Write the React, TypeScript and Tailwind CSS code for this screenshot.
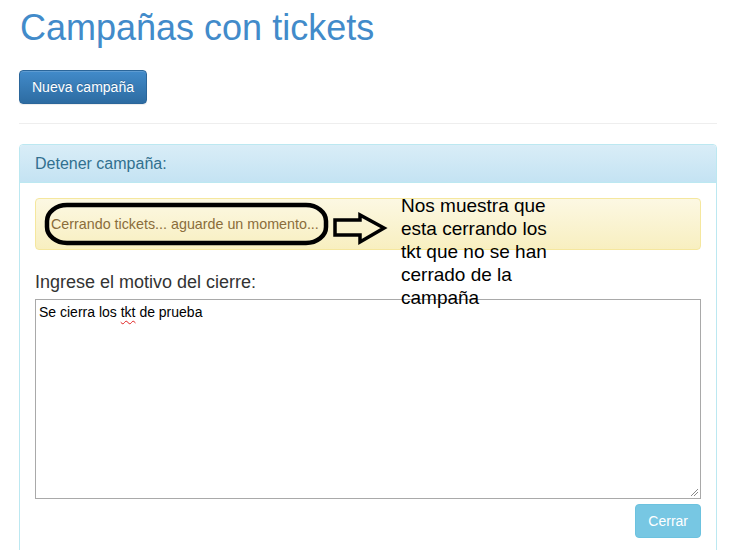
import React from 'react';

const font = "font-['Liberation_Sans',Arial,Helvetica,sans-serif]";

function ClosingAlert() {
    return (
        <div className="relative z-10 rounded-[4px] border border-[#f5e79e] bg-gradient-to-b from-[#fcf8e3] to-[#f8efc0] p-[15px] text-[14.3px] leading-[20px] text-[#8a6d3b]">
            Cerrando tickets... aguarde un momento...
            {/* hand-drawn annotation: ring around the message + arrow */}
            <svg className="pointer-events-none absolute left-[-35px] top-[-198px]" width="420" height="260" viewBox="0 0 420 260">
                <rect x="46" y="204" width="279" height="38" rx="20" ry="16" fill="none" stroke="#000" strokeWidth="4.5" />
                <polygon
                    points="334,219 359,219 359,214 383,227 359,241 359,234 334,234"
                    fill="none"
                    stroke="#000"
                    strokeWidth="3.5"
                    strokeLinejoin="miter"
                />
            </svg>
            <div className="pointer-events-none absolute left-[365px] top-[-5px] text-[19px] leading-[23px] text-black">
                <div className="whitespace-nowrap">Nos muestra que</div>
                <div className="whitespace-nowrap">esta cerrando los</div>
                <div className="whitespace-nowrap">tkt que no se han</div>
                <div className="whitespace-nowrap">cerrado de la</div>
                <div className="whitespace-nowrap">campaña</div>
            </div>
        </div>
    );
}

function ReasonBox() {
    return (
        <div className="relative h-[200px] border border-[#a9a9a9] bg-white px-[3px] py-[3px] text-[14px] leading-[18px] text-black">
            Se cierra los{' '}
            <span className="underline decoration-[#e02020] decoration-wavy decoration-1 underline-offset-[3px]">tkt</span>{' '}
            de prueba
            <svg className="absolute bottom-[1px] right-[1px]" width="10" height="10" viewBox="0 0 10 10">
                <line x1="9" y1="2" x2="2" y2="9" stroke="#8a8a8a" strokeWidth="1" />
                <line x1="9" y1="5" x2="5" y2="9" stroke="#8a8a8a" strokeWidth="1" />
            </svg>
        </div>
    );
}

export default function App() {
    return (
        <div className={`${font} min-h-[550px] bg-white px-[19px] text-[14px] text-[#333]`}>
            <div className="w-[698px]">
                <h1 className="pt-[8px] pl-[1px] text-[36px] leading-[40px] font-normal text-[#428bca]">
                    Campañas con tickets
                </h1>

                <button className="mt-[22px] h-[34px] rounded-[4px] border border-[#2b669a] bg-gradient-to-b from-[#428bca] to-[#2d6ca2] px-3 text-[14px] leading-[20px] text-white shadow-[inset_0_1px_0_rgba(255,255,255,0.15),0_1px_1px_rgba(0,0,0,0.075)] [text-shadow:0_-1px_0_rgba(0,0,0,0.2)]">
                    Nueva campaña
                </button>

                <div className="mt-[19px] h-px bg-[#eeeeee]" />

                <div className="mt-[20px] rounded-[4px] border border-[#bce8f1] bg-white">
                    <div className="rounded-t-[3px] border-b border-[#bce8f1] bg-gradient-to-b from-[#d9edf7] to-[#c4e3f3] px-[15px] py-[10px] text-[16px] leading-[17px] text-[#31708f]">
                        Detener campaña:
                    </div>
                    <div className="p-[15px]">
                        <ClosingAlert />

                        <div className="mt-[20px] mb-[5px] text-[18px] leading-[24px] text-[#333]">
                            Ingrese el motivo del cierre:
                        </div>
                        <ReasonBox />

                        <div className="mt-[5px] flex justify-end">
                            <button className="h-[34px] rounded-[4px] border border-[#6cc2df] bg-[#77c7e3] px-3 text-[14px] leading-[20px] text-white">
                                Cerrar
                            </button>
                        </div>
                    </div>
                </div>
            </div>
        </div>
    );
}
